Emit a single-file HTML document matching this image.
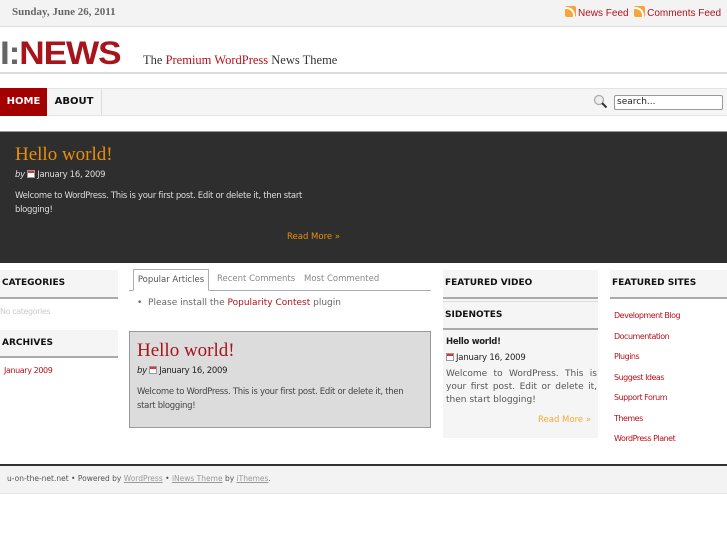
<!DOCTYPE html>
<html><head><meta charset="utf-8"><style>
*{margin:0;padding:0;box-sizing:border-box}
body{width:727px;height:545px;position:relative;background:#fff;font-family:"DejaVu Sans","Liberation Sans",sans-serif;overflow:hidden;color:#333}
.a{position:absolute;white-space:nowrap}
.red{color:#b5121b}
.hd{position:absolute;background:#f5f5f5;border-bottom:2px solid #aaa;font:bold 9px "DejaVu Sans",sans-serif;color:#111;padding:0 0 0 2px;line-height:27px}
.cal{display:inline-block;width:8px;height:8px;border:1px solid #999;background:#fff;vertical-align:-1px;margin-right:2px;box-shadow:inset 0 2px 0 #d33}
.rss{display:inline-block;width:11px;height:11px;background:#f7a53a;border-radius:2px;vertical-align:-1px;margin-right:2px;position:relative;overflow:hidden}
.rss:after{content:"";position:absolute;left:-7px;bottom:-7px;width:13px;height:13px;border:2px solid #fff;border-radius:50%}
.p{font-size:8.5px;letter-spacing:-.3px;line-height:14px;white-space:normal}
</style></head><body>
<div class="a" style="left:0;top:0;width:727px;height:27px;background:#f3f3f3;border-bottom:1px solid #ddd"></div>
<div class="a" style="left:12px;top:6px;font:bold 11px 'Liberation Serif',serif;color:#666">Sunday, June 26, 2011</div>
<div class="a" style="left:565px;top:6px;font:10px 'Liberation Sans',sans-serif"><span class="rss"></span><span class="red">News Feed</span> &nbsp;<span class="rss"></span><span class="red">Comments Feed</span></div>
<div class="a" style="left:0;top:36px;font:900 32px/34px 'Liberation Sans',sans-serif;letter-spacing:-1px;transform:scaleX(1.1);transform-origin:left"><span style="color:#666">I:</span><span style="color:#a8141c">NEWS</span></div>
<div class="a" style="left:143px;top:53px;font:12.5px 'Liberation Serif',serif;color:#333">The <span class="red">Premium WordPress</span> News Theme</div>
<div class="a" style="left:0;top:72px;width:727px;height:2px;background:#ddd"></div>
<div class="a" style="left:0;top:88px;width:727px;height:28px;background:#f5f5f5;border-top:1px solid #e4e4e4;border-bottom:1px solid #e4e4e4"></div>
<div class="a" style="left:0;top:88px;width:47px;height:28px;background:#a50000;color:#fff;font:bold 10px/28px 'DejaVu Sans',sans-serif;text-align:center">HOME</div>
<div class="a" style="left:47px;top:88px;width:55px;height:28px;border-right:1px solid #ddd;color:#111;font:bold 10px/28px 'DejaVu Sans',sans-serif;text-align:center">ABOUT</div>
<svg class="a" style="left:593px;top:94px" width="15" height="15"><circle cx="6" cy="6" r="4.5" fill="#eee" stroke="#aaa" stroke-width="1.3"/><line x1="9" y1="9" x2="13.5" y2="13.5" stroke="#333" stroke-width="2"/></svg>
<div class="a" style="left:614px;top:95px;width:109px;height:15px;border:1px solid #999;border-radius:2px;background:#fff;font-size:9px;line-height:13px;padding-left:2px;color:#222">search...</div>
<div class="a" style="left:0;top:131px;width:727px;height:132px;background:#2e2e2e;border-top:1px solid #999"></div>
<div class="a" style="left:15px;top:144px;font:19px 'Liberation Serif',serif;color:#e8900d">Hello world!</div>
<div class="a" style="left:15px;top:170px;font-size:8.5px;letter-spacing:-.3px;color:#ddd"><i>by</i> <span class="cal"></span>January 16, 2009</div>
<div class="a p" style="left:15px;top:189px;color:#ddd;width:300px">Welcome to WordPress. This is your first post. Edit or delete it, then start blogging!</div>
<div class="a" style="left:287px;top:232px;font-size:8.5px;color:#e8900d">Read More »</div>
<div class="hd" style="left:0;top:270px;width:118px;height:29px">CATEGORIES</div>
<div class="a" style="left:0;top:307px;font-size:8px;letter-spacing:-.4px;color:#ccc">No categories</div>
<div class="hd" style="left:0;top:330px;width:118px;height:28px">ARCHIVES</div>
<div class="a red" style="left:4px;top:366px;font-size:8px;letter-spacing:-.4px">January 2009</div>
<div class="a" style="left:129px;top:290px;width:302px;height:1px;background:#aab"></div>
<div class="a" style="left:133px;top:269px;width:76px;height:22px;border:1px solid #aab;border-bottom:1px solid #fff;background:#fff;font-size:8.5px;line-height:20px;text-align:center;color:#555">Popular Articles</div>
<div class="a" style="left:217px;top:274px;font-size:8.5px;color:#888">Recent Comments</div>
<div class="a" style="left:304px;top:274px;font-size:8.5px;color:#888">Most Commented</div>
<div class="a" style="left:137px;top:298px;font-size:9px;color:#666">•&nbsp; Please install the <span class="red">Popularity Contest</span> plugin</div>
<div class="a" style="left:129px;top:331px;width:302px;height:97px;background:#dcdcdc;border:1px solid #999"></div>
<div class="a" style="left:137px;top:340px;font:19px 'Liberation Serif',serif;color:#a8141c">Hello world!</div>
<div class="a" style="left:137px;top:366px;font-size:8.5px;letter-spacing:-.3px;color:#222"><i>by</i> <span class="cal"></span>January 16, 2009</div>
<div class="a p" style="left:137px;top:385px;color:#444;width:285px">Welcome to WordPress. This is your first post. Edit or delete it, then start blogging!</div>
<div class="a" style="left:443px;top:270px;width:155px;height:168px;background:#f5f5f5"></div>
<div class="hd" style="left:443px;top:270px;width:155px;height:29px">FEATURED VIDEO</div>
<div class="a" style="left:443px;top:301px;width:155px;height:1px;background:#ddd"></div>
<div class="hd" style="left:443px;top:302px;width:155px;height:28px">SIDENOTES</div>
<div class="a" style="left:446px;top:337px;font:bold 8.5px 'DejaVu Sans',sans-serif;letter-spacing:-.3px;color:#222">Hello world!</div>
<div class="a" style="left:446px;top:353px;font-size:8.5px;letter-spacing:-.2px;color:#222"><span class="cal"></span>January 16, 2009</div>
<div class="a" style="left:446px;top:368px;font-size:9px;line-height:13px;color:#555;white-space:normal;width:151px;text-align:justify">Welcome to WordPress. This is your first post. Edit or delete it, then start blogging!</div>
<div class="a" style="left:538px;top:415px;font-size:8.5px;color:#f6a83a">Read More »</div>
<div class="hd" style="left:610px;top:270px;width:117px;height:29px">FEATURED SITES</div>
<div class="a red" style="left:614px;top:306px;font-size:8px;letter-spacing:-.5px;line-height:20.5px">Development Blog<br>Documentation<br>Plugins<br>Suggest Ideas<br>Support Forum<br>Themes<br>WordPress Planet</div>
<div class="a" style="left:0;top:464px;width:727px;height:30px;background:#f3f3f3;border-top:2px solid #333;border-bottom:1px solid #e6e6e6"></div>
<div class="a" style="left:7px;top:474px;font-size:7.5px;color:#555">u-on-the-net.net • Powered by <u style="color:#999">WordPress</u> • <u style="color:#999">iNews Theme</u> by <u style="color:#999">iThemes</u>.</div>
</body></html>
